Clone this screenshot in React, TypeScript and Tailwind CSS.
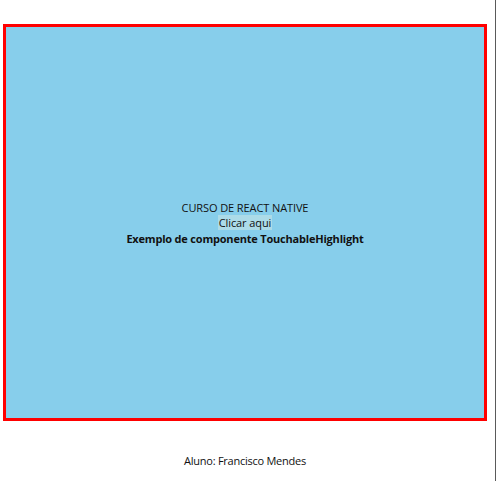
export default function App() {
  return (
    <div className="flex h-[481px] w-[496px] bg-white font-['Open_Sans',sans-serif] text-[#111]">
      <div className="flex w-[490px] flex-col">
        <div className="h-6" />
        <div className="mx-[3px] flex h-[397px] flex-col items-center justify-center border-[3px] border-[#ff0000] bg-[#87ceeb] text-[11px] leading-[15px] tracking-[-0.1px]">
          <p>CURSO DE REACT NATIVE</p>
          <p className="bg-[#acdbe8] px-[1px]">Clicar aqui</p>
          <p className="mt-px font-bold tracking-[-0.2px]">Exemplo de componente TouchableHighlight</p>
        </div>
        <p className="mt-[32px] text-center text-[11px] leading-[15px] tracking-[-0.25px]">Aluno: Francisco Mendes</p>
      </div>
      <div className="ml-[5px] w-px bg-[#5a5a5a]" />
    </div>
  );
}
